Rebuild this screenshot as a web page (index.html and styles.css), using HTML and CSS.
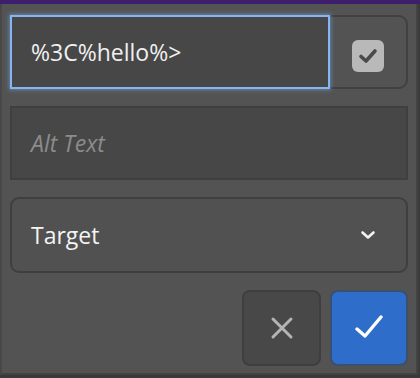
FILE: index.html
```html
<!DOCTYPE html>
<html lang="en">
  <head>
    <meta charset="utf-8">
    <title>Link editor</title>
    <link rel="stylesheet" href="styles.css">
  </head>
  <body>
    <div class="panel">
      <div class="row">
        <div class="field focused">%3C%hello%&gt;</div>
        <button class="toggle" type="button">
          <span class="checkbox">
            <svg width="20" height="16" viewBox="0 0 20 16"><path d="M3 8.5l5 4.5l9-10" fill="none" stroke="#4a4a4a" stroke-width="3.6" stroke-linecap="round" stroke-linejoin="round"/></svg>
          </span>
        </button>
      </div>

      <div class="field alt">Alt Text</div>

      <div class="select">
        <span>Target</span>
        <svg width="16" height="10" viewBox="0 0 16 10"><path d="M2.5 2.5l5.5 5l5.5-5" fill="none" stroke="#f2f2f2" stroke-width="2.6" stroke-linecap="round" stroke-linejoin="round"/></svg>
      </div>

      <div class="actions">
        <button class="btn cancel" type="button">
          <svg width="24" height="24" viewBox="0 0 24 24"><path d="M3 3l18 18M21 3L3 21" stroke="#b4b4b4" stroke-width="3" stroke-linecap="round"/></svg>
        </button>
        <button class="btn ok" type="button">
          <svg width="30" height="26" viewBox="0 0 30 26"><path d="M3 14l8 7l16-19" fill="none" stroke="#ffffff" stroke-width="3.4" stroke-linecap="round" stroke-linejoin="round"/></svg>
        </button>
      </div>
    </div>
  </body>
</html>
```

FILE: styles.css
```css
body {
  margin: 0;
  padding: 0;
  background: linear-gradient(to bottom, #3e1f6e 0, #3e1f6e 4px, #3a3a3a 4px);
  font-family: "Open Sans", "Liberation Sans", sans-serif;
}

.panel {
  margin: 4px 2px 3px 0;
  height: 371px;
  box-sizing: border-box;
  background: #535353;
  border-left: 2px solid #484848;
  border-right: 2px solid #434343;
  border-bottom: 2px solid #434343;
  padding: 11px 8px 0 8px;
  display: flex;
  flex-direction: column;
  gap: 17px;
}

.row {
  display: flex;
  height: 74px;
}

.field {
  box-sizing: border-box;
  height: 74px;
  background: #474747;
  border: 2px solid #3f3f3f;
  padding: 0 19px;
  display: flex;
  align-items: center;
  font-size: 23px;
  font-weight: 500;
  color: #f0f0f0;
}

.focused {
  width: 320px;
  border-color: #86b6f2;
  box-shadow: 0 0 4px 1px rgba(120, 170, 235, 0.55);
  position: relative;
  z-index: 1;
}

.toggle {
  width: 78px;
  height: 74px;
  box-sizing: border-box;
  background: #535353;
  border: 2px solid #414141;
  border-left: none;
  border-radius: 0 9px 9px 0;
  display: flex;
  align-items: center;
  justify-content: center;
  padding: 8px 0 0 0;
}

.checkbox {
  width: 32px;
  height: 32px;
  border-radius: 6px;
  background: #b9b9b9;
  display: flex;
  align-items: center;
  justify-content: center;
}

.alt {
  font-style: italic;
  font-weight: 400;
  color: #8c8c8c;
}

.select {
  box-sizing: border-box;
  height: 76px;
  border: 2px solid #3f3f3f;
  border-radius: 9px;
  background: #515151;
  padding: 0 30px 0 19px;
  display: flex;
  align-items: center;
  justify-content: space-between;
  font-size: 23px;
  font-weight: 500;
  color: #f4f4f4;
}

.actions {
  display: flex;
  justify-content: flex-end;
  gap: 9px;
}

.btn {
  width: 79px;
  height: 76px;
  box-sizing: border-box;
  border-radius: 8px;
  border: 2px solid #3e3e3e;
  display: flex;
  align-items: center;
  justify-content: center;
  padding: 0;
}

.cancel {
  background: #484848;
}

.ok {
  width: 78px;
  background: #2f6dcb;
  border-color: #3c4f6e;
}
```
